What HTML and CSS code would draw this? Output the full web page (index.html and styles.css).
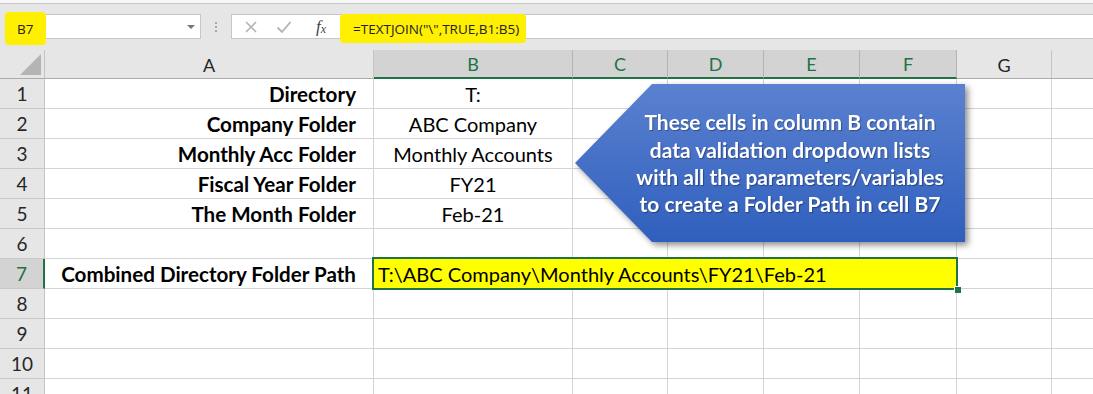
FILE: index.html
```html
<!DOCTYPE html>
<html lang="en">
<head>
    <meta charset="UTF-8">
    <title>Combined Directory Folder Path</title>
    <link rel="stylesheet" href="styles.css">
</head>
<body>
    <div class="top-strip"></div>
    <div class="formula-bar">
        <div class="name-box">
            <span class="marker name-marker">B7</span>
            <span class="drop-arrow"></span>
        </div>
        <div class="grip"><i></i><i></i><i></i></div>
        <div class="fx-box">
            <span class="fx-btn">
                <svg width="14" height="14" viewBox="0 0 14 14"><path d="M2 2 L12 12 M12 2 L2 12" stroke="#b3b3b3" stroke-width="1.6" fill="none"/></svg>
            </span>
            <span class="fx-btn">
                <svg width="16" height="14" viewBox="0 0 16 14"><path d="M1.5 7.5 L6 12 L14.5 2" stroke="#b3b3b3" stroke-width="1.8" fill="none"/></svg>
            </span>
            <span class="fx-label">f<sub>x</sub></span>
        </div>
        <div class="formula-input">
            <span class="marker formula-marker">=TEXTJOIN("\",TRUE,B1:B5)</span>
        </div>
    </div>

    <div class="sheet">
        <div class="hdr corner"><span class="corner-tri"></span></div>
        <div class="hdr col">A</div>
        <div class="hdr col sel">B</div>
        <div class="hdr col sel">C</div>
        <div class="hdr col sel">D</div>
        <div class="hdr col sel">E</div>
        <div class="hdr col sel">F</div>
        <div class="hdr col">G</div>
        <div class="hdr col"></div>

        <div class="hdr row">1</div>
        <div class="cell label">Directory</div>
        <div class="cell center">T:</div>
        <div class="cell"></div><div class="cell"></div><div class="cell"></div><div class="cell"></div><div class="cell"></div><div class="cell"></div>

        <div class="hdr row">2</div>
        <div class="cell label">Company Folder</div>
        <div class="cell center">ABC Company</div>
        <div class="cell"></div><div class="cell"></div><div class="cell"></div><div class="cell"></div><div class="cell"></div><div class="cell"></div>

        <div class="hdr row">3</div>
        <div class="cell label">Monthly Acc Folder</div>
        <div class="cell center">Monthly Accounts</div>
        <div class="cell"></div><div class="cell"></div><div class="cell"></div><div class="cell"></div><div class="cell"></div><div class="cell"></div>

        <div class="hdr row">4</div>
        <div class="cell label">Fiscal Year Folder</div>
        <div class="cell center">FY21</div>
        <div class="cell"></div><div class="cell"></div><div class="cell"></div><div class="cell"></div><div class="cell"></div><div class="cell"></div>

        <div class="hdr row">5</div>
        <div class="cell label">The Month Folder</div>
        <div class="cell center">Feb-21</div>
        <div class="cell"></div><div class="cell"></div><div class="cell"></div><div class="cell"></div><div class="cell"></div><div class="cell"></div>

        <div class="hdr row">6</div>
        <div class="cell"></div><div class="cell"></div><div class="cell"></div><div class="cell"></div><div class="cell"></div><div class="cell"></div><div class="cell"></div><div class="cell"></div>

        <div class="hdr row sel">7</div>
        <div class="cell label">Combined Directory Folder Path</div>
        <div class="cell merged">T:\ABC Company\Monthly Accounts\FY21\Feb-21</div>
        <div class="cell"></div><div class="cell"></div>

        <div class="hdr row">8</div>
        <div class="cell"></div><div class="cell"></div><div class="cell"></div><div class="cell"></div><div class="cell"></div><div class="cell"></div><div class="cell"></div><div class="cell"></div>

        <div class="hdr row">9</div>
        <div class="cell"></div><div class="cell"></div><div class="cell"></div><div class="cell"></div><div class="cell"></div><div class="cell"></div><div class="cell"></div><div class="cell"></div>

        <div class="hdr row">10</div>
        <div class="cell"></div><div class="cell"></div><div class="cell"></div><div class="cell"></div><div class="cell"></div><div class="cell"></div><div class="cell"></div><div class="cell"></div>

        <div class="hdr row">11</div>
        <div class="cell"></div><div class="cell"></div><div class="cell"></div><div class="cell"></div><div class="cell"></div><div class="cell"></div><div class="cell"></div><div class="cell"></div>
    </div>

    <div class="callout">
        <div class="callout-shape">
            <p>These cells in column B contain<br>data validation dropdown lists<br>with all the parameters/variables<br>to create a Folder Path in cell B7</p>
        </div>
    </div>
</body>
</html>
```

FILE: styles.css
```css
html, body {
    margin: 0;
    padding: 0;
    overflow: hidden;
}

body {
    width: 1093px;
    height: 394px;
    background-color: #e6e6e6;
    font-family: 'Lato', 'Liberation Sans', sans-serif;
    color: #000;
    position: relative;
}

.top-strip {
    height: 3px;
    background-color: #f7f7f7;
    border-bottom: 1px solid #c6c6c6;
}

/* formula bar */
.formula-bar {
    display: flex;
    align-items: stretch;
    height: 25px;
    padding: 10px 0 11px 5px;
    font-family: 'Open Sans', 'Noto Sans', sans-serif;
    font-size: 13.5px;
}

.name-box {
    width: 196px;
    box-sizing: border-box;
    background-color: #fff;
    border: 1px solid #c6c6c6;
    display: flex;
    align-items: center;
    justify-content: space-between;
    padding: 0 5px 0 0;
}

.marker {
    background-color: #ffef00;
    border-radius: 4px;
}

.name-marker {
    align-self: stretch;
    display: flex;
    align-items: center;
    width: 41px;
    box-sizing: border-box;
    padding-left: 12px;
    margin: -3px 0 -7px -1px;
    color: #222;
}

.drop-arrow {
    width: 0;
    height: 0;
    border-left: 4px solid transparent;
    border-right: 4px solid transparent;
    border-top: 4px solid #777;
}

.grip {
    width: 30px;
    display: flex;
    flex-direction: column;
    align-items: center;
    justify-content: center;
    gap: 2px;
}

.grip i {
    width: 2px;
    height: 2px;
    background-color: #a8a8a8;
}

.fx-box {
    width: 111px;
    box-sizing: border-box;
    background-color: #fff;
    border: 1px solid #c6c6c6;
    display: flex;
    align-items: center;
    padding-left: 12px;
    gap: 18px;
}

.fx-btn {
    display: flex;
    align-items: center;
}

.fx-label {
    font-family: 'Liberation Serif', serif;
    font-style: italic;
    font-size: 17px;
    color: #444;
    margin-left: 6px;
}

.fx-label sub {
    font-size: 12px;
    vertical-align: -1px;
}

.formula-input {
    flex: 1;
    margin-left: 3px;
    background-color: #fff;
    border-top: 1px solid #c6c6c6;
    border-bottom: 1px solid #c6c6c6;
    display: flex;
    align-items: center;
}

.formula-marker {
    align-self: stretch;
    display: flex;
    align-items: center;
    margin: -1px 0 -5px -5px;
    padding: 0 7px 0 13px;
    color: #222;
}

/* grid */
.sheet {
    display: grid;
    grid-template-columns: 45px 329px 199px 95px 96px 96px 97px 95px 96px;
    grid-auto-rows: 30px;
    grid-template-rows: 29px;
    background-color: #fff;
    width: 1148px;
}

.hdr {
    background-color: #e6e6e6;
    box-sizing: border-box;
    display: flex;
    align-items: center;
    justify-content: center;
    font-size: 18px;
    color: #262626;
}

.hdr.col {
    border-right: 1px solid #c4c4c4;
    border-bottom: 1px solid #ababab;
    padding-top: 1px;
}

.hdr.col.sel {
    background-color: #d3d3d3;
    color: #217346;
    border-bottom: 2px solid #217346;
    border-right-color: #b4b4b4;
}

.hdr.corner {
    border-right: 1px solid #c4c4c4;
    border-bottom: 1px solid #ababab;
    position: relative;
}

.corner-tri {
    position: absolute;
    right: 3px;
    bottom: 3px;
    width: 0;
    height: 0;
    border-left: 21px solid transparent;
    border-bottom: 21px solid #b4b4b4;
}

.hdr.row {
    border-right: 1px solid #c4c4c4;
    border-bottom: 1px solid #c9c9c9;
    font-size: 19px;
}

.hdr.row.sel {
    background-color: #d3d3d3;
    color: #217346;
    border-right: 2px solid #217346;
}

.cell {
    box-sizing: border-box;
    border-right: 1px solid #d4d4d4;
    border-bottom: 1px solid #d4d4d4;
    font-size: 20px;
    display: flex;
    align-items: center;
    padding: 1px 3px 0;
    white-space: nowrap;
}

.cell.label {
    justify-content: flex-end;
    font-weight: bold;
    font-size: 20.6px;
    padding-right: 17px;
}

.cell.center {
    justify-content: center;
}

.cell.merged {
    grid-column: span 5;
    background-color: #ffff00;
    position: relative;
    padding-left: 4px;
}

.cell.merged::after {
    content: '';
    position: absolute;
    left: -2px;
    top: -2px;
    right: -2px;
    bottom: -2px;
    border: 2px solid #217346;
}

.cell.merged::before {
    content: '';
    position: absolute;
    right: -5px;
    bottom: -5px;
    width: 6px;
    height: 6px;
    background-color: #217346;
    border-left: 1px solid #fff;
    border-top: 1px solid #fff;
    z-index: 2;
}

/* callout shape */
.callout {
    position: absolute;
    left: 575px;
    top: 84px;
    width: 390px;
    height: 158px;
    filter: drop-shadow(3px 3px 3px rgba(0, 0, 0, 0.45));
}

.callout-shape {
    width: 100%;
    height: 100%;
    background: linear-gradient(#5b81d0, #2f5fbd);
    clip-path: polygon(0 79px, 77px 0, 100% 0, 100% 100%, 77px 100%);
    display: flex;
    align-items: center;
    justify-content: center;
    box-sizing: border-box;
    padding-left: 40px;
}

.callout-shape p {
    margin: 0;
    color: #fff;
    font-weight: bold;
    font-size: 21px;
    line-height: 27.3px;
    text-align: center;
    text-shadow: 1px 1px 1px rgba(0, 0, 0, 0.35);
}
```
